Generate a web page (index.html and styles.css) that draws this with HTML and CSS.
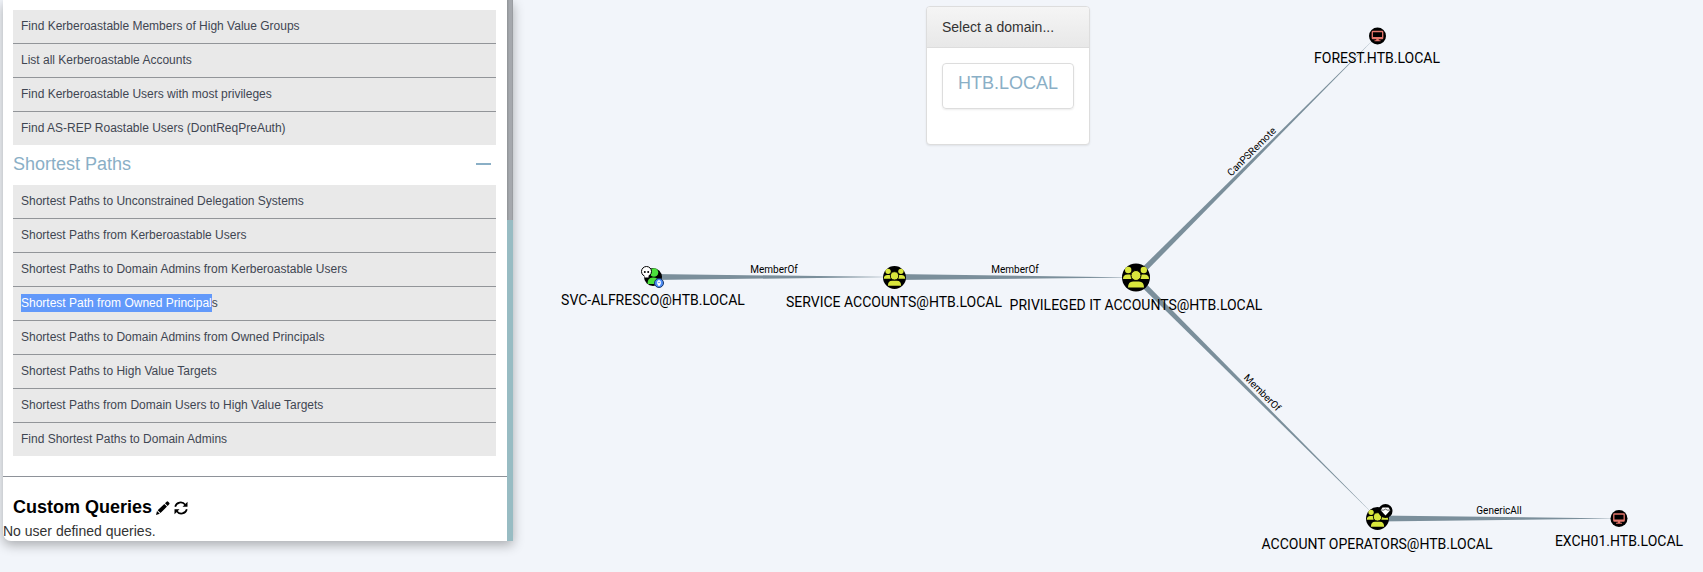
FILE: index.html
```html
<!DOCTYPE html>
<html lang="en">
<head>
<meta charset="utf-8">
<title>Domain graph</title>
<link rel="stylesheet" href="styles.css">
</head>
<body>
<div class="app">
  <aside class="sidebar">
    <div class="queries">
      <ul class="query-list">
        <li><a href="#">Find Kerberoastable Members of High Value Groups</a></li>
        <li><a href="#">List all Kerberoastable Accounts</a></li>
        <li><a href="#">Find Kerberoastable Users with most privileges</a></li>
        <li><a href="#">Find AS-REP Roastable Users (DontReqPreAuth)</a></li>
      </ul>
      <button class="group-toggle" type="button">Shortest Paths
        <svg width="15" height="4" aria-hidden="true"><rect y="1" width="15" height="2" fill="#8aafc6"/></svg>
      </button>
      <ul class="query-list">
        <li><a href="#">Shortest Paths to Unconstrained Delegation Systems</a></li>
        <li><a href="#">Shortest Paths from Kerberoastable Users</a></li>
        <li><a href="#">Shortest Paths to Domain Admins from Kerberoastable Users</a></li>
        <li><a href="#"><mark>Shortest Path from Owned Principal</mark>s</a></li>
        <li><a href="#">Shortest Paths to Domain Admins from Owned Principals</a></li>
        <li><a href="#">Shortest Paths to High Value Targets</a></li>
        <li><a href="#">Shortest Paths from Domain Users to High Value Targets</a></li>
        <li><a href="#">Find Shortest Paths to Domain Admins</a></li>
      </ul>
      <section class="custom">
        <div class="custom-head">
          <h3>Custom Queries</h3>
          <button class="icon-button" type="button" aria-label="Edit queries">
            <svg width="14" height="14" viewBox="0 0 14 14" aria-hidden="true"><path d="M0 14l1-4 2.800 2.800zM1.700 9.200l6.600-6.300 2.700 2.700-6.500 6.500zM9 2.200l1.600-1.500q.8-.7 1.600 0l1 1q.7.8 0 1.600l-1.500 1.600z"/></svg>
          </button>
          <button class="icon-button" type="button" aria-label="Refresh queries">
            <svg width="14" height="14" viewBox="0 0 14 14" aria-hidden="true"><path d="M1.200 5.800a5.600 5.600 0 0 1 10-2M12.800 8.200a5.600 5.600 0 0 1-10 2" fill="none" stroke="#000" stroke-width="1.700"/><path d="M13.500.8v5.000H8.500zM.5 13.200v-5h5z"/></svg>
          </button>
        </div>
        <p>No user defined queries.</p>
      </section>
    </div>
    <div class="scroll-track"><div class="scroll-thumb"></div></div>
  </aside>

  <main class="stage">
    <svg class="graph" viewBox="513 0 1190 572" preserveAspectRatio="xMinYMin meet" role="img" aria-label="Attack path graph">
      <defs>
        <g id="group">
          <circle r="14" fill="#000"/>
          <g fill="#d9e63c">
            <circle cx="-7.800" cy="-7.500" r="3.200"/><circle cx="7.800" cy="-7.500" r="3.200"/>
            <path d="M-13 1.500q0-4.500 4.500-4.500h2.500q1.500 0 1.200 2l.3 2.500zM13 1.500q0-4.500-4.500-4.500H6q-1.500 0-1.200 2l-.3 2.500z"/>
            <circle cy="-2" r="5" stroke="#000" stroke-width="1"/>
            <path d="M-8 10q0-6 5-6h6q5 0 5 6z"/>
          </g>
        </g>
        <g id="computer">
          <circle r="8.500" fill="#000"/>
          <rect x="-5.200" y="-4.500" width="10.400" height="7" rx=".6" fill="none" stroke="#e4766b" stroke-width="1.300"/>
          <path d="M-5 1h10v1.500H-5zM-1 2.500h2l.4 1.800h1.600v1h-6v-1h1.600z" fill="#e4766b"/>
        </g>
      </defs>

      <g class="edges">
        <path d="M653 274v6L894 277z"/>
        <path d="M894 274v6L1136 277.500z"/>
        <path d="M1134 275.500l4 4L1377 36z"/>
        <path d="M1138 275.500l-4 4L1377 518z"/>
        <path d="M1377 515.500v6L1619 518.500z"/>
      </g>

      <g class="edge-labels">
        <text x="774" y="273">MemberOf</text>
        <text x="1015" y="273">MemberOf</text>
        <text transform="translate(1254 154) rotate(-45)">CanPSRemote</text>
        <text transform="translate(1260 395) rotate(45)">MemberOf</text>
        <text x="1499" y="514">GenericAll</text>
      </g>

      <g transform="translate(653 277)">
        <circle r="9" fill="#000"/>
        <circle cx="1" cy="-4.500" r="4.300" fill="#4be03c"/>
        <path d="M-5.500 7q0-6.500 5-6.500h1.500q5 0 5 6.500z" fill="#4be03c"/>
        <circle cx="-6.500" cy="-5.500" r="5" fill="#fff" stroke="#000" stroke-width="1"/>
        <path d="M-8.500-2h4v2.500h-4z" fill="#fff"/>
        <circle cx="-8.200" cy="-5" r="1"/><circle cx="-4.800" cy="-5" r="1"/>
        <circle cx="6" cy="6" r="4.500" fill="#4f8df5" stroke="#17386d" stroke-width="1"/>
        <path d="M4.200 4.500l1-1.300h1.600l1 1.300v2l-1 2.300H5.200l-1-2.300z" fill="#fff"/>
        <circle cx="6" cy="5.500" r=".8" fill="#4f8df5"/>
      </g>
      <use href="#group" transform="translate(894.500 277.500) scale(.82)"/>
      <use href="#group" transform="translate(1136 277.500)"/>
      <use href="#computer" transform="translate(1377.500 36)"/>
      <use href="#group" transform="translate(1377.500 518.500) scale(.82)"/>
      <g transform="translate(1385.500 511)">
        <circle r="7"/>
        <path d="M-3-3.500h6L4.800-.8 0 4.500-4.800-.8z" fill="#fff"/>
        <path d="M-4.500-.9h2.800l1.700-1 1.700 1h2.800" fill="none" stroke="#000" stroke-width=".6"/>
      </g>
      <use href="#computer" transform="translate(1619 518.500)"/>

      <g class="node-labels">
        <text x="653" y="305">SVC-ALFRESCO@HTB.LOCAL</text>
        <text x="894" y="307">SERVICE ACCOUNTS@HTB.LOCAL</text>
        <text x="1136" y="310">PRIVILEGED IT ACCOUNTS@HTB.LOCAL</text>
        <text x="1377" y="63">FOREST.HTB.LOCAL</text>
        <text x="1377" y="549">ACCOUNT OPERATORS@HTB.LOCAL</text>
        <text x="1619" y="546">EXCH01.HTB.LOCAL</text>
      </g>
    </svg>

    <section class="domain-panel">
      <h2>Select a domain...</h2>
      <div class="domain-body">
        <button class="domain-choice" type="button">HTB.LOCAL</button>
      </div>
    </section>
  </main>
</div>
</body>
</html>
```
FILE: styles.css
```css
* {
  box-sizing: border-box;
}

body {
  margin: 0;
  background: #f2f5fa;
  color: #333;
  font: 14px/20px "Liberation Sans", Arial, sans-serif;
}

ul, h2, h3, p {
  margin: 0;
  padding: 0;
}

button {
  border: 0;
  background: none;
  font: inherit;
  cursor: pointer;
}

.app {
  display: flex;
  align-items: flex-start;
  min-height: 100vh;
  padding-left: 3px;
  overflow: hidden;
}

.sidebar {
  display: flex;
  flex: none;
  width: 510px;
  background: #fff;
  border-radius: 0 0 0 8px;
  box-shadow: 0 4px 12px rgba(0, 0, 0, 0.3);
}

.queries {
  flex: 1;
  padding-top: 10px;
}

.query-list {
  margin: 0 11px 0 10px;
  list-style: none;
  background: #e9e9e9;
}

.query-list li + li {
  border-top: 1px solid #929599;
}

.query-list a {
  display: block;
  padding: 8px 8px;
  color: #3f4652;
  font-size: 12px;
  line-height: 17px;
  text-decoration: none;
}

.query-list mark {
  padding: 2px 0;
  background: #6299fa;
  color: #fff;
}

.group-toggle {
  display: flex;
  align-items: center;
  justify-content: space-between;
  width: 100%;
  height: 40px;
  padding: 0 16px 2px 10px;
  color: #8aafc6;
  font-size: 18px;
}

.custom {
  margin-top: 20px;
  padding: 20px 0 0;
  border-top: 1px solid #8e9299;
}

.custom-head {
  display: flex;
  align-items: center;
  gap: 4px;
  padding-left: 10px;
}

.custom-head h3 {
  color: #000;
  font-size: 18px;
  line-height: 20px;
}

.icon-button {
  display: flex;
  padding: 1px 0 0;
}

.custom p {
  padding: 4px 0 0;
}

.scroll-track {
  flex: none;
  width: 6px;
  background: #98bcc3;
}

.scroll-thumb {
  height: 220px;
  background: linear-gradient(90deg, #8f9397, #a5a8ad 40%, #a5a8ad 80%, #929599);
}

.stage {
  position: relative;
  flex: 1;
  min-width: 0;
}

.graph {
  display: block;
  width: 100%;
  overflow: visible;
}

.edges {
  fill: #7b8f9b;
}

.edge-labels,
.node-labels {
  fill: #000;
  font-family: Roboto, sans-serif;
  text-anchor: middle;
}

.edge-labels {
  font-size: 10px;
}

.node-labels {
  font-size: 14px;
}

.domain-panel {
  position: absolute;
  top: 6px;
  left: 413px;
  width: 164px;
  overflow: hidden;
  background: #fff;
  border: 1px solid #ddd;
  border-radius: 4px;
  box-shadow: 0 1px 2px rgba(0, 0, 0, 0.08);
}

.domain-panel h2 {
  padding: 10px 15px;
  background: linear-gradient(#f5f5f5, #e8e8e8);
  border-bottom: 1px solid #ddd;
  font-size: 14px;
  font-weight: 400;
  line-height: 20px;
}

.domain-body {
  padding: 15px 15px 35px;
}

.domain-choice {
  width: 100%;
  padding: 9px 0 15px;
  border: 1px solid #ddd;
  border-radius: 4px;
  box-shadow: 0 1px 2px rgba(0, 0, 0, 0.08);
  color: #8aafc6;
  font-size: 18px;
  line-height: 20px;
}
```
